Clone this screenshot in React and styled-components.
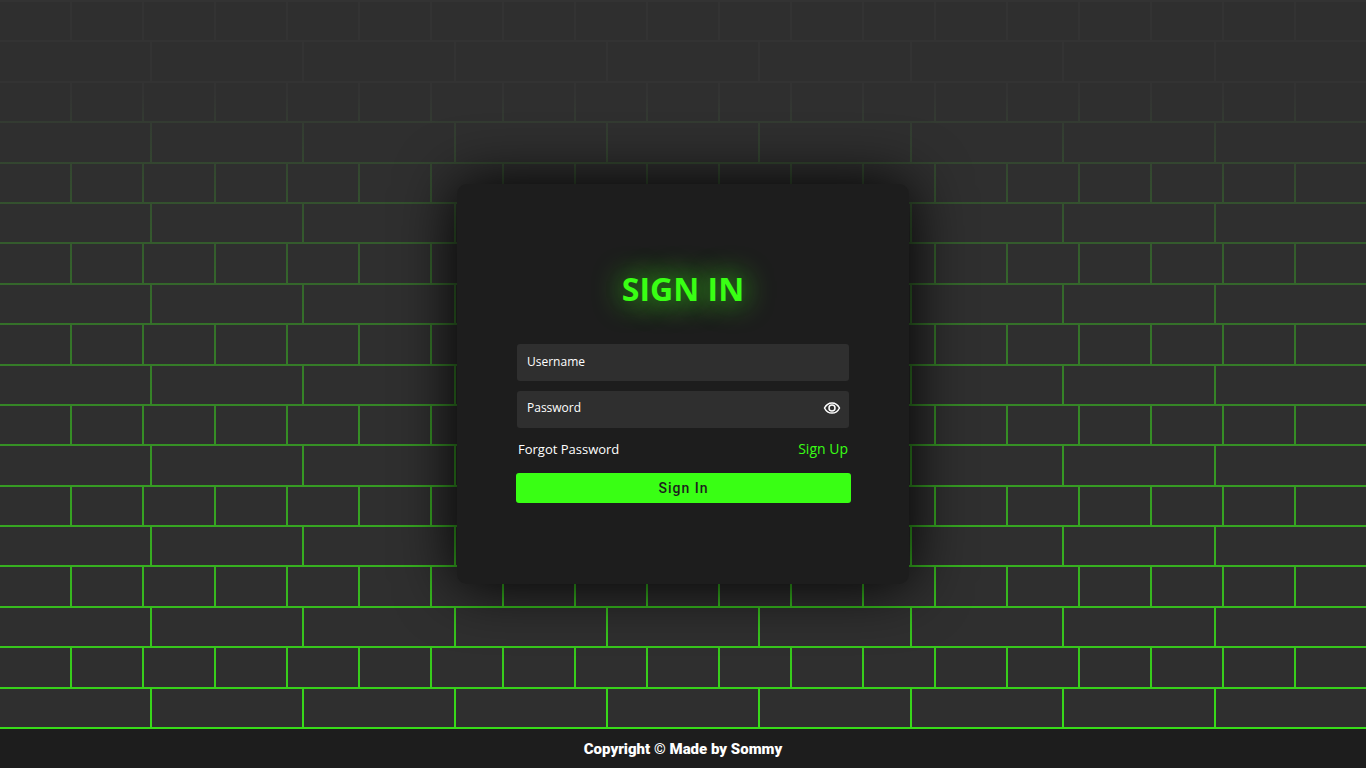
import React, { useState } from "react";
import styled, { createGlobalStyle } from "styled-components";

const neon = "#39ff14";
const panel = "#1d1d1d";
const brick = "#2f2f2f";

const GlobalStyle = createGlobalStyle`
  *, *::before, *::after { box-sizing: border-box; }
  body {
    margin: 0;
    background: ${panel};
    font-family: "Open Sans", "Noto Sans", sans-serif;
  }
`;

const Page = styled.div`
  display: grid;
  grid-template-rows: 1fr auto;
  min-height: 100vh;
`;

const Wall = styled.div`
  grid-area: 1 / 1 / 3 / 2;
  padding: 2px 0;
  overflow: hidden;
  display: flex;
  flex-direction: column;
  gap: 2px;
  align-self: start;
  background: linear-gradient(#333333 0, #333333 12vh, #39ff14 112vh);
`;

const Course = styled.div`
  height: 5vh;
  background: repeating-linear-gradient(
    to right,
    ${brick} 0,
    ${brick} ${(p) => p.$brick}px,
    transparent ${(p) => p.$brick}px,
    transparent ${(p) => p.$brick + 2}px
  );
`;

const Main = styled.main`
  grid-area: 1 / 1 / 3 / 2;
  z-index: 1;
  display: grid;
  place-items: center;
`;

const Card = styled.form`
  width: 452px;
  max-width: 100%;
  min-height: 400px;
  padding: 84px 60px 80px;
  display: flex;
  flex-direction: column;
  background: ${panel};
  border-radius: 10px;
  box-shadow: 0 0 60px #000000;
`;

const Title = styled.h1`
  margin: 0 0 34px;
  font-size: 32px;
  line-height: 42px;
  font-weight: 700;
  text-align: center;
  text-transform: uppercase;
  color: ${neon};
  text-shadow: 0 0 30px ${neon};
`;

const Field = styled.label`
  display: flex;
  align-items: center;
  height: 37px;
  margin-bottom: 10px;
  padding: 0 8px ${(p) => (p.$withIcon ? 4 : 2)}px 10px;
  border-radius: 3px;
  background: ${brick};
`;

const Input = styled.input`
  flex: 1;
  min-width: 0;
  padding: 0;
  border: 0;
  outline: 0;
  background: transparent;
  color: #ffffff;
  font-family: inherit;
  font-size: 12px;
  line-height: 18px;
  &::placeholder { color: #ffffff; opacity: 1; }
`;

const EyeButton = styled.button`
  display: flex;
  padding: 0;
  border: 0;
  background: none;
  color: #ffffff;
  cursor: pointer;
`;

const Links = styled.div`
  display: flex;
  justify-content: space-between;
  padding: 0 1px;
  line-height: 22px;
`;

const TextLink = styled.a`
  font-size: ${(p) => (p.$accent ? 14 : 13)}px;
  font-weight: ${(p) => (p.$accent ? 500 : 400)};
  color: ${(p) => (p.$accent ? neon : "#ffffff")};
  text-decoration: none;
`;

const Submit = styled.button`
  height: 30px;
  margin: 13px -2px 0 -1px;
  padding: 0;
  border: 0;
  border-radius: 3px;
  background: ${neon};
  color: ${panel};
  font-family: Roboto, sans-serif;
  font-size: 14px;
  font-weight: 500;
  letter-spacing: 1px;
  cursor: pointer;
`;

const Footer = styled.footer`
  grid-area: 2 / 1 / 3 / 2;
  z-index: 2;
  display: flex;
  align-items: center;
  justify-content: center;
  height: 39px;
  background: ${panel};
  color: #ffffff;
  font-family: Roboto, sans-serif;
  font-size: 15px;
  font-weight: 900;
`;

const Eye = () => (
  <svg width="18" height="18" viewBox="0 0 18 18" fill="none" stroke="currentColor" strokeWidth="1.5" aria-hidden="true">
    <path d="M1.5 9C3.2 5.6 5.9 3.9 9 3.9s5.8 1.700 7.500 5.100c-1.700 3.400-4.400 5.100-7.500 5.100S3.200 12.400 1.500 9Z" />
    <circle cx="9" cy="9" r="3" />
  </svg>
);

const courses = Array.from({ length: 18 }, (_, i) => (i % 2 ? 150 : 70));

export default function App() {
  const [visible, setVisible] = useState(false);
  return (
    <>
      <GlobalStyle />
      <Page>
        <Wall aria-hidden="true">
          {courses.map((width, i) => (
            <Course key={i} $brick={width} />
          ))}
        </Wall>
        <Main>
          <Card onSubmit={(e) => e.preventDefault()}>
            <Title>Sign In</Title>
            <Field>
              <Input type="text" placeholder="Username" aria-label="Username" />
            </Field>
            <Field $withIcon>
              <Input type={visible ? "text" : "password"} placeholder="Password" aria-label="Password" />
              <EyeButton type="button" aria-label="Show password" onClick={() => setVisible(!visible)}>
                <Eye />
              </EyeButton>
            </Field>
            <Links>
              <TextLink href="#forgot">Forgot Password</TextLink>
              <TextLink href="#signup" $accent>Sign Up</TextLink>
            </Links>
            <Submit type="submit">Sign In</Submit>
          </Card>
        </Main>
        <Footer>Copyright © Made by Sommy</Footer>
      </Page>
    </>
  );
}
